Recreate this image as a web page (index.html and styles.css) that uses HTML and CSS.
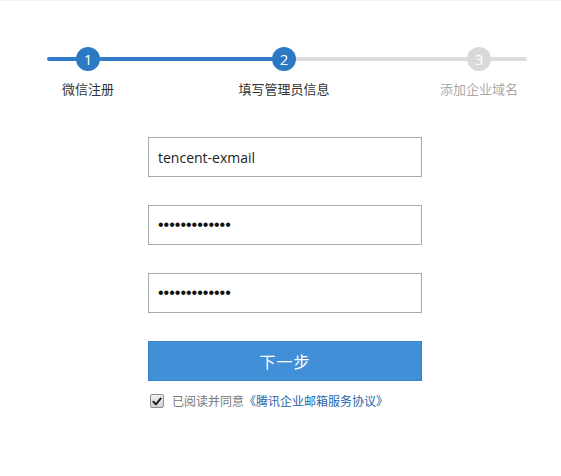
FILE: index.html
```html
<!DOCTYPE html>
<html lang="zh-CN">
<head>
<meta charset="utf-8">
<title>注册</title>
<link rel="stylesheet" href="styles.css">
</head>
<body>
<div class="page">
  <div class="stepper">
    <div class="seg seg-first done"></div>
    <div class="step">
      <div class="dot active">1</div>
      <div class="label">微信注册</div>
    </div>
    <div class="seg seg-mid done"></div>
    <div class="step">
      <div class="dot active">2</div>
      <div class="label">填写管理员信息</div>
    </div>
    <div class="seg seg-mid2"></div>
    <div class="step">
      <div class="dot">3</div>
      <div class="label muted">添加企业域名</div>
    </div>
    <div class="seg seg-last"></div>
  </div>

  <form class="form">
    <input class="field" type="text" value="tencent-exmail">
    <input class="field pw" type="password" value="1234567890123">
    <input class="field pw" type="password" value="1234567890123">
    <button class="submit" type="button">下一步</button>
    <label class="agree">
      <span class="check"><svg viewBox="0 0 13 13" width="13" height="13"><path d="M2.6 6.8 L5.3 9.6 L10.6 3.2" fill="none" stroke="#222" stroke-width="2.2" stroke-linecap="round" stroke-linejoin="round"/></svg></span>
      <span class="agree-text">已阅读并同意</span><a class="agree-link" href="#">《腾讯企业邮箱服务协议》</a>
    </label>
  </form>
</div>
</body>
</html>
```

FILE: styles.css
```css
html, body {
  margin: 0;
  padding: 0;
  background: #fff;
}
body {
  font-family: "Noto Sans CJK SC", "Noto Sans", sans-serif;
  color: #333;
  border-top: 1px solid #f1f1f1;
}
.page {
  padding-top: 46px;
}
.stepper {
  display: flex;
  align-items: flex-start;
  margin-left: 47px;
  width: 480px;
  height: 74px;
}
.seg {
  height: 4px;
  margin-top: 10px;
  background: #dcdcdc;
}
.seg.done {
  background: #2f7dc8;
}
.seg-first { width: 29px; border-radius: 2px 0 0 2px; }
.seg-mid { width: 172px; }
.seg-mid2 { width: 171px; }
.seg-last { width: 36px; border-radius: 0 2px 2px 0; }
.step {
  width: 24px;
  display: flex;
  flex-direction: column;
  align-items: center;
}
.dot {
  width: 24px;
  height: 24px;
  border-radius: 50%;
  background: #d9d9d9;
  color: #fff;
  font-family: "Open Sans", "Noto Sans", sans-serif;
  font-size: 15px;
  line-height: 24px;
  text-align: center;
}
.dot.active {
  background: #2b78c3;
}
.label {
  width: 140px;
  margin-top: 9px;
  text-align: center;
  font-size: 13px;
  line-height: 18px;
  color: #333;
  white-space: nowrap;
}
.label.muted {
  color: #aaa;
}
.form {
  margin-left: 148px;
  margin-top: 16px;
  width: 274px;
  display: flex;
  flex-direction: column;
  gap: 28px;
}
.field {
  box-sizing: border-box;
  width: 274px;
  height: 40px;
  margin: 0;
  padding: 0 9px;
  border: 1px solid #a9a9a9;
  border-radius: 0;
  outline: none;
  font-family: "Open Sans", "Noto Sans", sans-serif;
  font-size: 14px;
  color: #222;
  background: #fff;
}
.field.pw {
  font-family: "Liberation Sans", Arial, sans-serif;
  font-size: 16px;
  letter-spacing: 0;
  color: #111;
}
.submit {
  box-sizing: border-box;
  width: 274px;
  height: 40px;
  margin: 0;
  border: 1px solid #3882c8;
  background: #418fd7;
  color: #fff;
  font-family: "Noto Sans CJK SC", sans-serif;
  font-size: 16px;
  letter-spacing: 1px;
  cursor: pointer;
}
.agree {
  display: flex;
  align-items: center;
  margin-top: -17px;
  font-size: 12px;
  line-height: 18px;
  color: #777;
}
.check {
  box-sizing: border-box;
  width: 14px;
  height: 14px;
  margin-left: 2px;
  margin-right: 8px;
  border: 1px solid #8f8f8f;
  border-radius: 2px;
  background: linear-gradient(#f0f0f0, #d2d2d2);
  display: flex;
  align-items: center;
  justify-content: center;
}
.check svg {
  display: block;
}
.agree-link {
  color: #2466ad;
  text-decoration: none;
}
```
